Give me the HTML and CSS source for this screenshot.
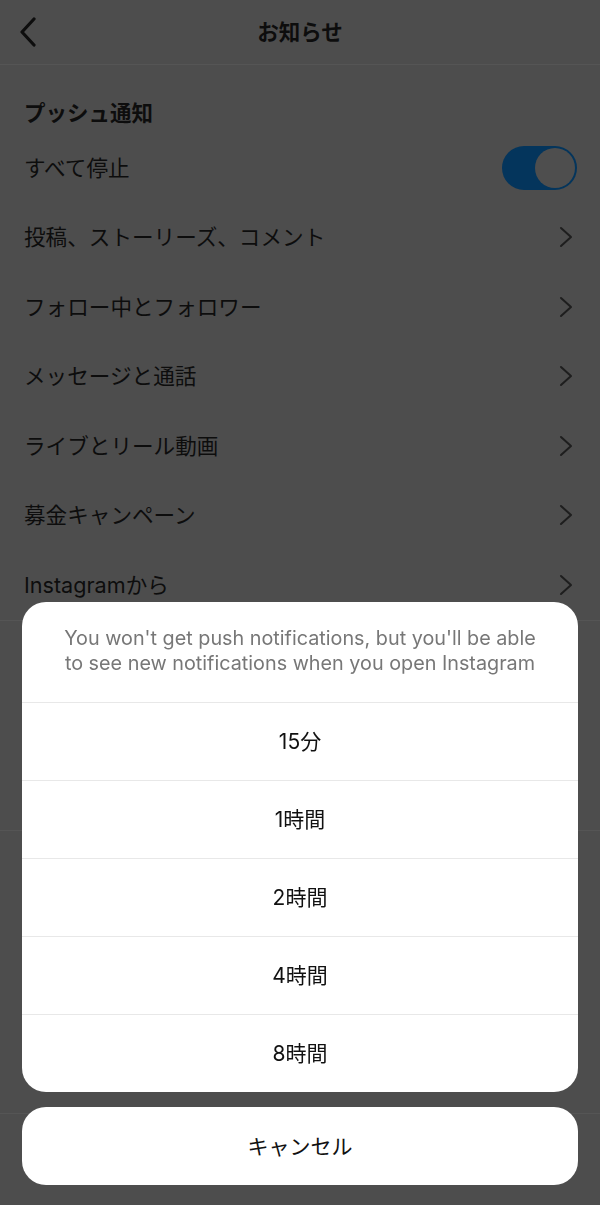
FILE: index.html
```html
<!DOCTYPE html>
<html lang="ja">
<head>
<meta charset="utf-8">
<title>お知らせ</title>
<link rel="stylesheet" href="styles.css">
</head>
<body>
<div class="page">
  <header class="topbar">
    <span class="back">
      <svg width="20" height="30" viewBox="0 0 20 30"><path d="M16 2 L4 15 L16 28" fill="none" stroke="#0d0d0d" stroke-width="3.2" stroke-linecap="round" stroke-linejoin="round"/></svg>
    </span>
    <h1 class="title">お知らせ</h1>
  </header>

  <section class="section">
    <h2 class="section-title">プッシュ通知</h2>
    <div class="row">
      <span class="label">すべて停止</span>
      <span class="toggle"><span class="knob"></span></span>
    </div>
    <div class="row"><span class="label">投稿、ストーリーズ、コメント</span><span class="chev"><svg width="14" height="22" viewBox="0 0 14 22"><path d="M2 2 L12 11 L2 20" fill="none" stroke="#1e1e1e" stroke-width="2" stroke-linecap="round" stroke-linejoin="round"/></svg></span></div>
    <div class="row"><span class="label">フォロー中とフォロワー</span><span class="chev"><svg width="14" height="22" viewBox="0 0 14 22"><path d="M2 2 L12 11 L2 20" fill="none" stroke="#1e1e1e" stroke-width="2" stroke-linecap="round" stroke-linejoin="round"/></svg></span></div>
    <div class="row"><span class="label">メッセージと通話</span><span class="chev"><svg width="14" height="22" viewBox="0 0 14 22"><path d="M2 2 L12 11 L2 20" fill="none" stroke="#1e1e1e" stroke-width="2" stroke-linecap="round" stroke-linejoin="round"/></svg></span></div>
    <div class="row"><span class="label">ライブとリール動画</span><span class="chev"><svg width="14" height="22" viewBox="0 0 14 22"><path d="M2 2 L12 11 L2 20" fill="none" stroke="#1e1e1e" stroke-width="2" stroke-linecap="round" stroke-linejoin="round"/></svg></span></div>
    <div class="row"><span class="label">募金キャンペーン</span><span class="chev"><svg width="14" height="22" viewBox="0 0 14 22"><path d="M2 2 L12 11 L2 20" fill="none" stroke="#1e1e1e" stroke-width="2" stroke-linecap="round" stroke-linejoin="round"/></svg></span></div>
    <div class="row"><span class="label">Instagramから</span><span class="chev"><svg width="14" height="22" viewBox="0 0 14 22"><path d="M2 2 L12 11 L2 20" fill="none" stroke="#1e1e1e" stroke-width="2" stroke-linecap="round" stroke-linejoin="round"/></svg></span></div>
  </section>
  <section class="section block-a"></section>
  <section class="section block-b"></section>
</div>

<div class="sheet">
  <div class="menu">
    <p class="menu-head">You won't get push notifications, but you'll be able to see new notifications when you open Instagram</p>
    <div class="opt">15分</div>
    <div class="opt">1時間</div>
    <div class="opt">2時間</div>
    <div class="opt">4時間</div>
    <div class="opt">8時間</div>
  </div>
  <div class="cancel">キャンセル</div>
</div>
</body>
</html>
```

FILE: styles.css
```css
* { box-sizing: border-box; }
html, body {
  margin: 0;
  padding: 0;
  background: #4d4d4d;
}
body {
  width: 600px;
  height: 1205px;
  overflow: hidden;
  font-family: Inter, "Noto Sans CJK JP", sans-serif;
  color: #0d0d0d;
}
.topbar {
  height: 65px;
  border-bottom: 1px solid #555555;
  display: flex;
  align-items: center;
  justify-content: center;
  position: relative;
}
.back {
  position: absolute;
  left: 18px;
  top: 17px;
  display: flex;
}
.title {
  margin: 0;
  font-size: 21.5px;
  font-weight: 700;
  line-height: 30px;
}
.section {
  border-bottom: 1px solid #555555;
}
.section-title {
  margin: 0;
  padding: 33px 24px 0;
  font-size: 21.5px;
  font-weight: 700;
  line-height: 30px;
  height: 68px;
}
.row {
  height: 69.5px;
  display: flex;
  align-items: center;
  justify-content: space-between;
  padding: 0 27px 0 24px;
}
.label {
  font-size: 21.6px;
  line-height: 30px;
  font-weight: 400;
}
.chev { display: flex; }
.toggle {
  width: 75px;
  height: 44px;
  border-radius: 22px;
  background: #04355c;
  display: flex;
  align-items: center;
  justify-content: flex-end;
  padding-right: 2px;
  margin-right: -4px;
}
.knob {
  width: 40px;
  height: 40px;
  border-radius: 50%;
  background: #4e4e4e;
}
.block-a { height: 210px; }
.block-b { height: 283px; }

.sheet {
  position: fixed;
  left: 22px;
  right: 22px;
  bottom: 20px;
  display: flex;
  flex-direction: column;
  gap: 15px;
}
.menu {
  background: #ffffff;
  border-radius: 24px;
  overflow: hidden;
}
.menu-head {
  margin: 0;
  height: 100px;
  padding: 24px 36px 0;
  text-align: center;
  font-size: 19.8px;
  line-height: 25px;
  color: #777777;
}
.opt, .cancel {
  height: 78px;
  display: flex;
  align-items: center;
  justify-content: center;
  font-size: 21px;
  color: #111111;
}
.opt {
  border-top: 1px solid #e8e8e8;
  padding-bottom: 3px;
}
.cancel {
  background: #ffffff;
  border-radius: 24px;
  padding-bottom: 2px;
}
```
